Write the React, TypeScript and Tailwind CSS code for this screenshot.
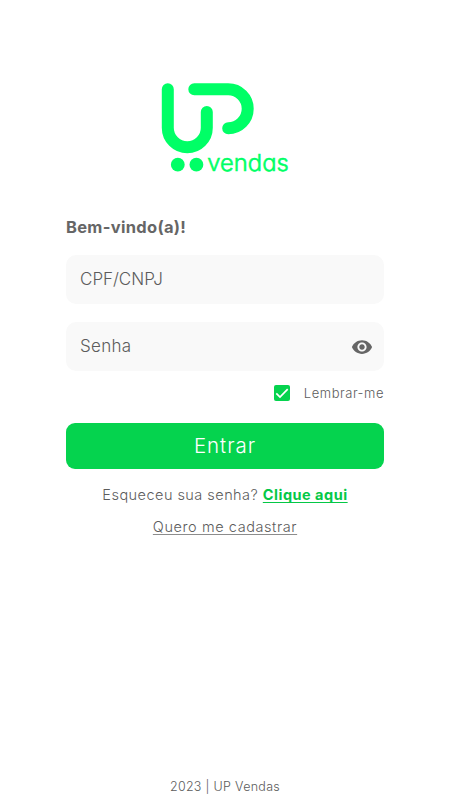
import { useState } from "react";

function Logo() {
  return (
    <svg
      className="h-[96px] w-[130px]"
      viewBox="160 80 130 96"
      fill="none"
      stroke="#00ff66"
      strokeWidth={12}
      strokeLinecap="round"
      role="img"
      aria-label="UP Vendas"
    >
      <path d="M167.8 89.3V127.8a19.5 19.5 0 0 0 39 0V112" />
      <path d="M194.3 89.3H228.2a19.5 19.5 0 0 1 0 39" />
      <g fill="#00ff66" stroke="none">
        <circle cx="177.8" cy="164.7" r="6.9" />
        <circle cx="196.4" cy="164.7" r="6.9" />
        <text
          x="207.3"
          y="171.3"
          fontSize="23"
          fontWeight="300"
          textLength="81.5"
          lengthAdjust="spacingAndGlyphs"
          stroke="#00ff66"
          strokeWidth={0.6}
          className="font-['Inter',sans-serif] [font-feature-settings:'cv11']"
        >
          vendas
        </text>
      </g>
    </svg>
  );
}

function EyeIcon() {
  return (
    <svg className="h-[22px] w-[22px]" viewBox="0 0 24 24" fill="#666666">
      <path d="M12 4.5C7 4.5 2.73 7.61 1 12c1.73 4.39 6 7.5 11 7.5s9.27-3.11 11-7.5c-1.73-4.39-6-7.5-11-7.5zM12 17c-2.76 0-5-2.24-5-5s2.24-5 5-5 5 2.24 5 5-2.24 5-5 5zm0-8c-1.66 0-3 1.34-3 3s1.34 3 3 3 3-1.34 3-3-1.34-3-3-3z" />
    </svg>
  );
}

export default function App() {
  const [remember, setRemember] = useState(true);
  const [showPassword, setShowPassword] = useState(false);

  return (
    <main className="flex h-[800px] w-full flex-col items-center overflow-hidden bg-white pt-20 font-['Inter',sans-serif] font-light text-[#5c5c5c]">
      <Logo />

      <form className="mt-[39px] flex w-[318px] flex-col" onSubmit={(e) => e.preventDefault()}>
        <h1 className="h-6 text-[16.5px] leading-6 font-bold tracking-[0.3px] text-[#666666]">
          Bem-vindo(a)!
        </h1>

        <div className="mt-4 flex h-[49px] items-center rounded-[10px] bg-[#f9f9f9] px-[14px]">
          <input
            type="text"
            placeholder="CPF/CNPJ"
            className="w-full bg-transparent pb-[2px] text-[17px] leading-6 outline-none placeholder:text-[#5c5c5c]"
          />
        </div>

        <div className="mt-[18px] flex h-[49px] items-center rounded-[10px] bg-[#f9f9f9] pr-[11px] pl-[14px]">
          <input
            type={showPassword ? "text" : "password"}
            placeholder="Senha"
            className="w-full bg-transparent pb-[2px] text-[17px] leading-6 tracking-[0.3px] outline-none placeholder:text-[#5c5c5c]"
          />
          <button type="button" aria-label="Mostrar senha" onClick={() => setShowPassword(!showPassword)}>
            <EyeIcon />
          </button>
        </div>

        <button
          type="button"
          role="checkbox"
          aria-checked={remember}
          onClick={() => setRemember(!remember)}
          className="mt-[13px] flex h-[18px] items-center justify-end"
        >
          <span className="flex h-4 w-4 items-center justify-center rounded-[2px] bg-[#05d34e]">
            {remember && (
              <svg className="h-4 w-4" viewBox="0 0 16 16" fill="none" stroke="white" strokeWidth={1.7}>
                <path d="M2.3 8.3 6 12l7.7-7.8" />
              </svg>
            )}
          </span>
          <span className="ml-[14px] text-[13px] leading-[18px] tracking-[0.54px]">Lembrar-me</span>
        </button>

        <button
          type="submit"
          className="mt-[21px] h-[46px] rounded-[9px] bg-[#05d34e] text-[20.5px] leading-[46px] tracking-[0.95px] text-white"
        >
          Entrar
        </button>

        <p className="mt-4 text-center text-[14.5px] leading-5 whitespace-nowrap">
          <span className="tracking-[0.46px]">Esqueceu sua senha? </span>
          <a
            href="#"
            className="font-bold tracking-[0.5px] text-[#05c846] underline decoration-1 underline-offset-2 [text-decoration-skip-ink:none]"
          >
            Clique aqui
          </a>
        </p>
        <p className="mt-3 text-center text-[14.5px] leading-5">
          <a
            href="#"
            className="tracking-[0.58px] underline decoration-[#8c8c8c] decoration-1 underline-offset-2 [text-decoration-skip-ink:none]"
          >
            Quero me cadastrar
          </a>
        </p>
      </form>

      <footer className="mt-auto pb-1 text-[12.5px] leading-[18px] tracking-[0.3px]">2023 | UP Vendas</footer>
    </main>
  );
}
